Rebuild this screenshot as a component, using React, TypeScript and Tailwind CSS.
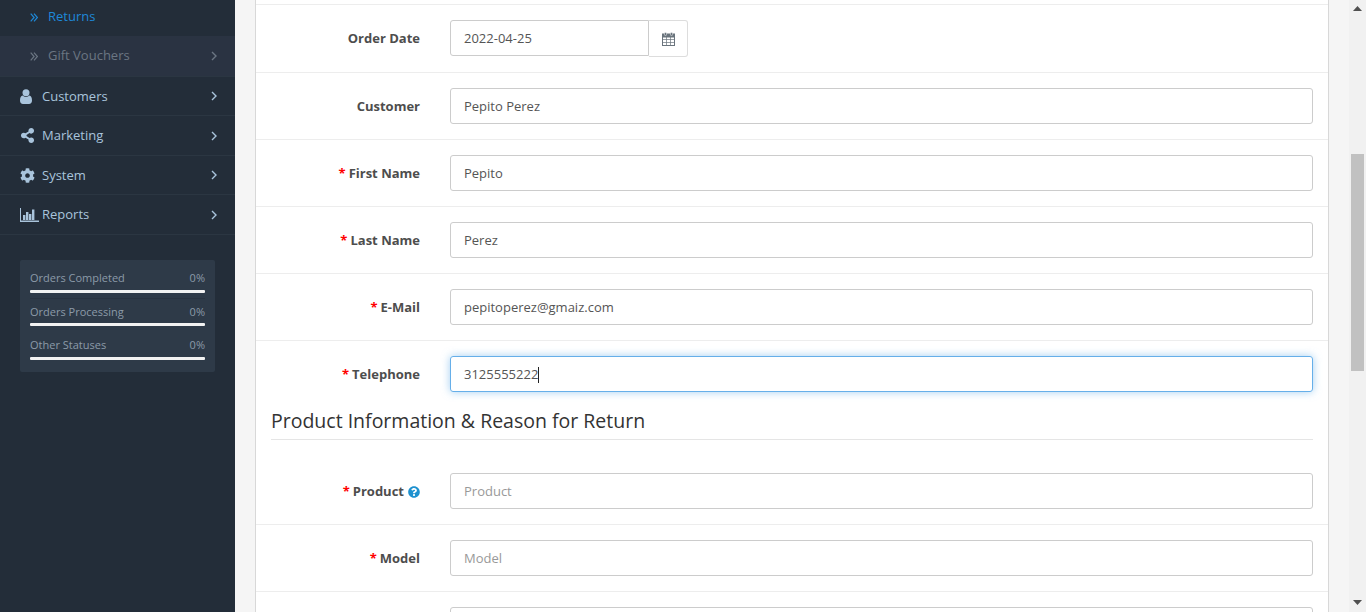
import React from "react";
import { FaShareAlt, FaCog, FaQuestionCircle } from "react-icons/fa";

const F = "font-['Open_Sans',sans-serif]";

function Chevron() {
  return (
    <svg width="6" height="10" viewBox="0 0 6 10" fill="none" stroke="currentColor" strokeWidth="1.4" className="shrink-0">
      <path d="M1 1l4 4-4 4" />
    </svg>
  );
}

function DoubleChevron() {
  return (
    <svg width="8" height="9" viewBox="0 0 8 9" fill="none" stroke="currentColor" strokeWidth="1.2" className="shrink-0 mr-[10px]">
      <path d="M0.7 0.7l3.4 3.8-3.4 3.8M4 0.7l3.4 3.8-3.4 3.8" />
    </svg>
  );
}

function NavRow({ icon, label, h, textPad = "" }: { icon: React.ReactNode; label: string; h: string; textPad?: string }) {
  return (
    <div className={`flex items-center pl-5 pr-[18px] text-[13px] text-[#a9c4dc] border-b border-[#2b3642] ${h}`}>
      <span className="w-[22px] flex items-center shrink-0">{icon}</span>
      <span className={`flex-1 ${textPad}`}>{label}</span>
      <Chevron />
    </div>
  );
}

function UserIcon() {
  return (
    <svg width="12" height="15" viewBox="0 0 12 15" fill="currentColor">
      <circle cx="6" cy="3.7" r="3.5" />
      <path d="M2.6 6.6C3.5 7.5 4.6 8 6 8s2.5-.5 3.4-1.4C11 6.9 12 8.5 12 11.6 12 13.8 10.8 15 9 15H3C1.2 15 0 13.8 0 11.6 0 8.5 1 6.9 2.6 6.6z" />
    </svg>
  );
}

function BarChartIcon() {
  return (
    <svg width="19" height="14" viewBox="0 0 19 14" fill="currentColor">
      <path d="M0 0h1v12.6h18V14H0z" />
      <rect x="3" y="7" width="2.4" height="5" />
      <rect x="6" y="4" width="2.4" height="8" />
      <rect x="9" y="6" width="2.4" height="6" />
      <rect x="12" y="1.5" width="2.4" height="10.5" />
    </svg>
  );
}

function CalendarIcon() {
  return (
    <svg width="13" height="14" viewBox="0 0 13 14" fill="none" stroke="#6a747d" strokeWidth="1">
      <rect x="0.5" y="2.5" width="12" height="11" fill="#fff" />
      <rect x="0.5" y="2" width="12" height="3" fill="#6a747d" />
      <path d="M4.5 5v8M8.5 5v8M0.5 7.5h12M0.5 10.5h12" strokeWidth="0.7" />
      <rect x="2.5" y="0.5" width="2" height="3" rx="0.8" fill="#6a747d" stroke="#fff" strokeWidth="0.5" />
      <rect x="8.5" y="0.5" width="2" height="3" rx="0.8" fill="#6a747d" stroke="#fff" strokeWidth="0.5" />
    </svg>
  );
}

function Stat({ label, gap }: { label: string; gap: string }) {
  return (
    <div>
      <div className="flex justify-between text-[11px] leading-[15px] text-[#8c9aa8]">
        <span>{label}</span>
        <span>0%</span>
      </div>
      <div className={`h-[3px] bg-[#f2f2f2] rounded-[1px] ${gap}`} />
    </div>
  );
}

function Label({ text, required, help }: { text: string; required?: boolean; help?: boolean }) {
  return (
    <div className="w-[164px] shrink-0 text-[13px] font-bold text-[#4d4d4d] flex justify-end items-center pt-[2px]">
      {required && <span className="text-[#ff0000] mr-[3px]">*</span>}
      <span>{text}</span>
      {help && <FaQuestionCircle className="w-[12px] h-[12px] ml-[4px] text-[#1e91cf]" />}
    </div>
  );
}

function Row({ text, value, placeholder, required, help, focus, noLine }: { text: string; value?: string; placeholder?: string; required?: boolean; help?: boolean; focus?: boolean; noLine?: boolean }) {
  return (
    <div className={`flex items-center gap-[30px] border-t pr-[15px] py-[15px] ${noLine ? "border-transparent" : "border-[#ededed]"}`}>
      <Label text={text} required={required} help={help} />
      <div
        className={`flex-1 h-[36px] flex items-center rounded-[3px] border px-[13px] pt-[2px] text-[13px] ${
          focus ? "border-[#66afe9] shadow-[0_0_8px_rgba(102,175,233,0.6)]" : "border-[#ccc]"
        } ${value ? "text-[#555]" : "text-[#999]"}`}
      >
        {value ?? placeholder}
        {focus && <span className="w-px h-[16px] bg-[#222]" />}
      </div>
    </div>
  );
}

export default function App() {
  return (
    <div className={`flex h-[612px] w-[1366px] overflow-hidden bg-[#f5f5f5] ${F}`}>
      <aside className="w-[235px] shrink-0 bg-[#232d39]">
        <div className="h-[36px] flex items-center pl-[30px] pb-[2px] text-[13px] text-[#1e88d8]">
          <DoubleChevron />
          Returns
        </div>
        <div className="h-[41px] flex items-center pl-[30px] pr-[18px] text-[13px] text-[#6b7683] bg-[#2a3342] border-b border-[#2b3642]">
          <DoubleChevron />
          <span className="flex-1">Gift Vouchers</span>
          <Chevron />
        </div>
        <NavRow h="h-[39px]" icon={<UserIcon />} label="Customers" textPad="pt-[2px]" />
        <NavRow h="h-[40px]" icon={<FaShareAlt className="w-[15px] h-[15px]" />} label="Marketing" />
        <NavRow h="h-[39px]" icon={<FaCog className="w-[15px] h-[15px]" />} label="System" textPad="pt-[2px]" />
        <NavRow h="h-[40px]" icon={<BarChartIcon />} label="Reports" />
        <div className="mt-[25px] ml-[20px] w-[195px] h-[112px] bg-[#2e3a48] rounded-[2px] px-[10px] pt-[10px]">
          <div className="border-b border-[#2a3441] pb-[5px] mb-[5px]">
            <Stat label="Orders Completed" gap="mt-[5px]" />
          </div>
          <div className="pb-[11px]">
            <Stat label="Orders Processing" gap="mt-[4px]" />
          </div>
          <Stat label="Other Statuses" gap="mt-[5px]" />
        </div>
      </aside>

      <main className="flex-1 px-[20px]">
        <div className="h-full bg-white border-x border-[#d8d8d8]">
          <div className="h-[4px]" />
          <div className="flex items-start gap-[30px] border-t border-[#ededed] pr-[15px] py-[15px]">
            <div className="h-[36px] flex"><Label text="Order Date" /></div>
            <div className="flex items-start">
              <div className="w-[199px] h-[36px] flex items-center rounded-l-[3px] border border-[#ccc] px-[13px] pt-[2px] text-[13px] text-[#555]">
                2022-04-25
              </div>
              <div className="w-[39px] h-[37px] flex items-center justify-center rounded-r-[3px] border border-l-0 border-[#ddd]">
                <CalendarIcon />
              </div>
            </div>
          </div>
          <Row text="Customer" value="Pepito Perez" />
          <Row text="First Name" value="Pepito" required />
          <Row text="Last Name" value="Perez" required />
          <Row text="E-Mail" value="pepitoperez@gmaiz.com" required />
          <Row text="Telephone" value="3125555222" required focus />
          <div className="mx-[15px] -mt-[1px] h-[34px] flex items-end pb-[5px] border-b border-[#e5e5e5] text-[19.5px] leading-[26px] text-[#333]">
            Product Information &amp; Reason for Return
          </div>
          <div className="h-[17px]" />
          <Row text="Product" placeholder="Product" required help noLine />
          <Row text="Model" placeholder="Model" required />
          <div className="flex gap-[30px] border-t border-[#ededed] pr-[15px] pt-[15px]">
            <div className="w-[164px]" />
            <div className="flex-1 h-[36px] rounded-[3px] border border-[#ccc]" />
          </div>
        </div>
      </main>

      <div className="w-[17px] shrink-0 bg-[#f1f1f1] flex flex-col items-center">
        <svg width="9" height="6" viewBox="0 0 9 6" className="mt-[6px] fill-[#505050]"><path d="M4.5 0 9 5H0z" /></svg>
        <div className="mt-[142px] w-[13px] h-[217px] bg-[#c1c1c1]" />
        <div className="flex-1" />
        <svg width="9" height="6" viewBox="0 0 9 6" className="mb-[6px] fill-[#505050]"><path d="M0 0h9L4.5 5z" /></svg>
      </div>
    </div>
  );
}
